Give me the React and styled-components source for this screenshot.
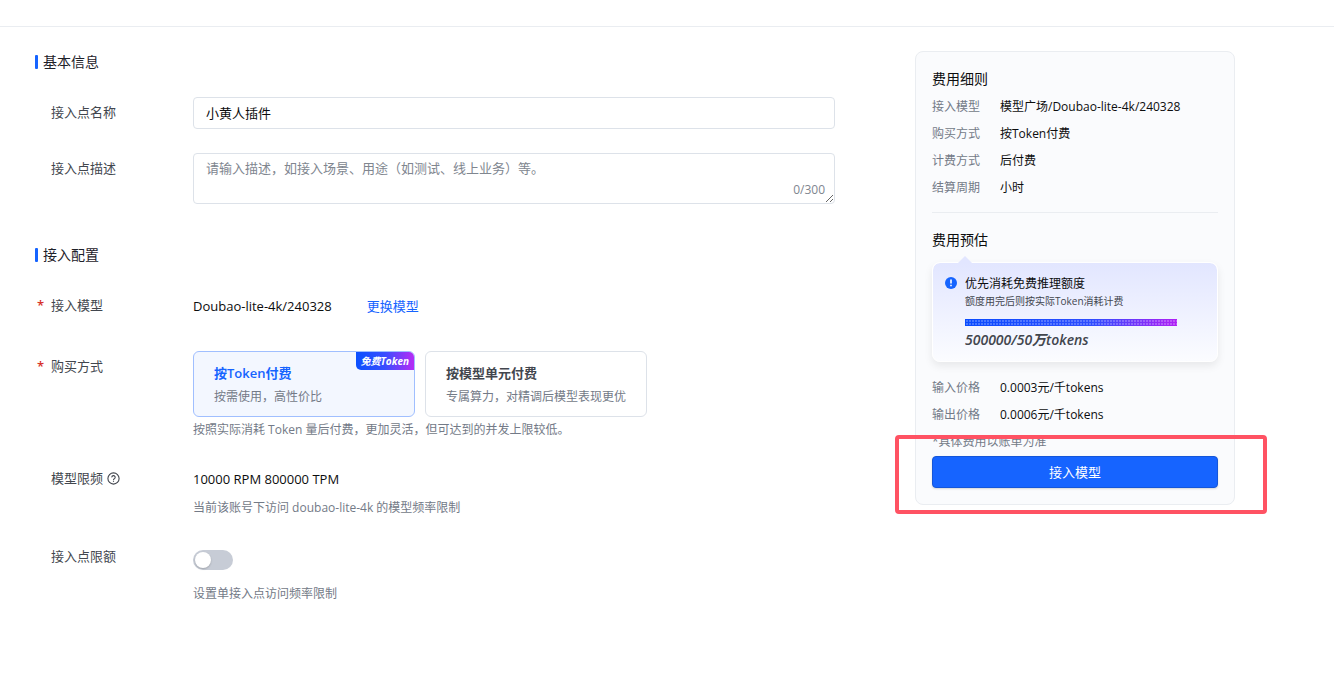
import { useState } from "react";
import styled, { createGlobalStyle, css } from "styled-components";

const GlobalStyle = createGlobalStyle`
  * {
    box-sizing: border-box;
  }

  body {
    margin: 0;
    background: #fff;
    color: #0c0d0e;
    font-family: "Open Sans", "Noto Sans CJK SC", sans-serif;
    font-size: 13px;
    line-height: 22px;
  }

  input,
  textarea,
  button {
    font: inherit;
  }
`

const TopBar = styled.header`
  height: 27px;
  border-bottom: 1px solid #eaedf1;
`

const Page = styled.main`
  display: flex;
  align-items: flex-start;
  gap: 80px;
  padding: 24px 99px 40px 35px;
`

const Form = styled.form`
  flex: 1;
  min-width: 0;
  display: flex;
  flex-direction: column;
  gap: 40px;
`

const SectionTitle = styled.h2`
  display: flex;
  align-items: center;
  gap: 5px;
  margin: 0 0 24px;
  font-size: 14px;
  font-weight: 400;
  color: #1d2129;

  &::before {
    content: "";
    width: 3px;
    height: 14px;
    border-radius: 1px;
    background: #1664ff;
  }
`

const Rows = styled.div`
  display: flex;
  flex-direction: column;
  gap: ${({ $gap }) => $gap}px;
`

const Row = styled.div`
  display: flex;
  align-items: flex-start;
  padding-left: 16px;
`

const labelText = css`
  position: relative;
  display: flex;
  align-items: center;
  gap: 4px;
  flex: 0 0 142px;
  line-height: 30px;
  color: #42464e;
`

const RowLabel = styled.label`
  ${labelText}
`

const RowName = styled.span`
  ${labelText}
`

const Required = styled.span`
  position: absolute;
  left: -14px;
  font-weight: 600;
  color: #d7312a;
`

const Control = styled.div`
  flex: 1;
  min-width: 0;
`

const field = css`
  display: block;
  width: 100%;
  border: 1px solid #dde2e9;
  border-radius: 4px;
  background: #fff;
  color: #0c0d0e;
  outline: none;

  &::placeholder {
    color: #80868f;
    opacity: 1;
  }
`

const TextInput = styled.input`
  ${field}
  height: 32px;
  padding: 0 12px 2px;
`

const AreaWrap = styled.div`
  position: relative;
`

const TextArea = styled.textarea`
  ${field}
  height: 51px;
  padding: 3px 12px;
  resize: vertical;
`

const Counter = styled.span`
  position: absolute;
  right: 10px;
  bottom: 4px;
  font-size: 12px;
  line-height: 20px;
  color: #80868f;
`

const Value = styled.div`
  display: flex;
  gap: 35px;
  min-height: ${({ $height }) => $height}px;
  line-height: 32px;
`

const TextLink = styled.a`
  color: #1664ff;
  text-decoration: none;
`

const Hint = styled.p`
  margin: ${({ $top }) => $top}px 0 0;
  font-size: 12px;
  color: #737a87;
`

const Options = styled.div`
  display: flex;
  flex-wrap: wrap;
  gap: 10px;
`

const Option = styled.label`
  position: relative;
  width: 222px;
  padding: 10px 20px 8px;
  border: 1px solid ${({ $active }) => ($active ? "#a0bfff" : "#dde2e9")};
  border-radius: 6px;
  background: ${({ $active }) => ($active ? "#f3f7ff" : "#fff")};
  cursor: pointer;

  input {
    position: absolute;
    opacity: 0;
  }
`

const OptionTitle = styled.strong`
  display: block;
  font-weight: 600;
  color: ${({ $active }) => ($active ? "#1664ff" : "#42464e")};
`

const OptionText = styled.span`
  display: block;
  margin-top: 2px;
  font-size: 12px;
  color: #737a87;
`

const Badge = styled.span`
  position: absolute;
  top: 0;
  right: 0;
  padding: 0 5px;
  border-radius: 0 5px 0 5px;
  background: linear-gradient(90deg, #0a50ff, #3a4dff 50%, #b62cf5);
  color: #fff;
  font-size: 10px;
  font-style: italic;
  font-weight: 700;
  line-height: 18px;
`

const Switch = styled.input`
  appearance: none;
  display: block;
  width: 40px;
  height: 20px;
  margin: 9px 0 0;
  padding: 2px;
  border-radius: 10px;
  background: ${({ checked }) => (checked ? "#1664ff" : "#c7ccd6")};
  cursor: pointer;

  &::before {
    content: "";
    display: block;
    width: 16px;
    height: 16px;
    margin-left: ${({ checked }) => (checked ? 20 : 0)}px;
    border-radius: 50%;
    background: #fff;
    box-shadow: 0 1px 2px rgba(0, 0, 0, 0.2);
  }
`

const Panel = styled.aside`
  flex: 0 0 320px;
  display: flex;
  flex-direction: column;
  padding: 16px;
  border: 1px solid #eaedf1;
  border-radius: 8px;
  background: #fafbfd;
`

const PanelTitle = styled.h3`
  margin: 0;
  font-size: 14px;
  font-weight: 400;
`

const Details = styled.dl`
  display: grid;
  grid-template-columns: 48px 1fr;
  gap: 7px 20px;
  margin: ${({ $top }) => $top}px 0 0;
  font-size: 12px;
  line-height: 20px;

  dt {
    color: #737a87;
  }

  dd {
    margin: 0;
  }
`

const Divider = styled.hr`
  width: 100%;
  margin: 14px 0 16px;
  border: 0;
  border-top: 1px solid #eaedf1;
`

const Quota = styled.div`
  position: relative;
  display: flex;
  align-items: flex-start;
  gap: 8px;
  margin-top: 11px;
  padding: 11px 40px 11px 12px;
  border: 1px solid #fff;
  border-radius: 8px;
  background: linear-gradient(#e2e6ff, #fbfcff) padding-box;
  box-shadow: 0 4px 8px rgba(0, 0, 0, 0.08);

  &::before {
    content: "";
    position: absolute;
    top: -7px;
    left: 25px;
    border: 7px solid transparent;
    border-top: 0;
    border-bottom-color: #e2e6ff;
  }
`

const QuotaIcon = styled.svg`
  flex: none;
  margin-top: 3px;
`

const QuotaBody = styled.div`
  flex: 1;
  font-size: 12px;
  line-height: 20px;
`

const QuotaNote = styled.div`
  font-size: 10px;
  line-height: 14px;
  color: #42464e;
`

const QuotaBar = styled.div`
  height: 7px;
  margin-top: 11px;
  background:
    radial-gradient(circle at 2px 2px, rgba(255, 255, 255, 0.24) 1px, transparent 1px) 0 0 / 3px 3px,
    linear-gradient(90deg, #0a4cff, #2f4dff 60%, #b020f5);
`

const QuotaCount = styled.div`
  margin-top: 4px;
  font-size: 14px;
  font-style: italic;
  font-weight: 600;
  color: #42464e;
`

const BillNote = styled.p`
  margin: 7px 0 4px;
  font-size: 12px;
  line-height: 20px;
  color: #737a87;
`

const Action = styled.div`
  position: relative;
`

const SubmitButton = styled.button`
  display: block;
  width: 100%;
  height: 32px;
  border: 1px solid #1456d9;
  border-radius: 4px;
  background: #1664ff;
  color: #fff;
  box-shadow: 0 1px 2px rgba(0, 0, 0, 0.15);
  cursor: pointer;
`

const Highlight = styled.div`
  position: absolute;
  inset: -21px -49px -26px -37px;
  border: 4px solid #ff5263;
  border-radius: 4px;
  pointer-events: none;
`

const HelpIcon = () => (
    <svg width="13" height="13" viewBox="0 0 13 13" fill="none" stroke="#42464e" strokeWidth="1.1">
        <circle cx="6.5" cy="6.5" r="5.6"/>
        <path d="M4.8 5.4a1.7 1.7 0 1 1 2.5 1.4c-.6.3-.8.6-.8 1.1"/>
        <path d="M6.5 8.7v1.1"/>
    </svg>
)

const options = [
    {
        id: "token",
        title: "按Token付费",
        text: "按需使用，高性价比",
        badge: "免费Token",
    },
    {
        id: "unit",
        title: "按模型单元付费",
        text: "专属算力，对精调后模型表现更优",
    },
]

const details = [
    ["接入模型", "模型广场/Doubao-lite-4k/240328"],
    ["购买方式", "按Token付费"],
    ["计费方式", "后付费"],
    ["结算周期", "小时"],
]

const prices = [
    ["输入价格", "0.0003元/千tokens"],
    ["输出价格", "0.0006元/千tokens"],
]

const DetailList = ({ items, top }) => (
    <Details $top={top}>
        {items.map(([name, value]) => [
            <dt key={name}>{name}</dt>,
            <dd key={value}>{value}</dd>,
        ])}
    </Details>
)

const App = () => {
    const [name, setName] = useState("小黄人插件")
    const [description, setDescription] = useState("")
    const [payment, setPayment] = useState("token")
    const [limited, setLimited] = useState(false)

    return (
        <>
            <GlobalStyle/>
            <TopBar/>
            <Page>
                <Form id="endpoint" onSubmit={(e) => e.preventDefault()}>
                    <section>
                        <SectionTitle>基本信息</SectionTitle>
                        <Rows $gap={24}>
                            <Row>
                                <RowLabel htmlFor="name">接入点名称</RowLabel>
                                <Control>
                                    <TextInput id="name" value={name} onChange={(e) => setName(e.target.value)}/>
                                </Control>
                            </Row>
                            <Row>
                                <RowLabel htmlFor="description">接入点描述</RowLabel>
                                <Control>
                                    <AreaWrap>
                                        <TextArea
                                            id="description"
                                            maxLength={300}
                                            placeholder="请输入描述，如接入场景、用途（如测试、线上业务）等。"
                                            value={description}
                                            onChange={(e) => setDescription(e.target.value)}
                                        />
                                        <Counter>{description.length}/300</Counter>
                                    </AreaWrap>
                                </Control>
                            </Row>
                        </Rows>
                    </section>

                    <section>
                        <SectionTitle>接入配置</SectionTitle>
                        <Rows $gap={22}>
                            <Row>
                                <RowName><Required>*</Required>接入模型</RowName>
                                <Control>
                                    <Value $height={39}>
                                        <span>Doubao-lite-4k/240328</span>
                                        <TextLink href="#model">更换模型</TextLink>
                                    </Value>
                                </Control>
                            </Row>
                            <Row>
                                <RowName id="payment"><Required>*</Required>购买方式</RowName>
                                <Control>
                                    <Options role="radiogroup" aria-labelledby="payment">
                                        {options.map((option) => (
                                            <Option key={option.id} $active={payment === option.id}>
                                                <input
                                                    type="radio"
                                                    name="payment"
                                                    checked={payment === option.id}
                                                    onChange={() => setPayment(option.id)}
                                                />
                                                <OptionTitle $active={payment === option.id}>{option.title}</OptionTitle>
                                                <OptionText>{option.text}</OptionText>
                                                {option.badge && <Badge>{option.badge}</Badge>}
                                            </Option>
                                        ))}
                                    </Options>
                                    <Hint $top={2}>按照实际消耗 Token 量后付费，更加灵活，但可达到的并发上限较低。</Hint>
                                </Control>
                            </Row>
                            <Row>
                                <RowName>模型限频<HelpIcon/></RowName>
                                <Control>
                                    <Value $height={32}>10000 RPM 800000 TPM</Value>
                                    <Hint $top={2}>当前该账号下访问 doubao-lite-4k 的模型频率限制</Hint>
                                </Control>
                            </Row>
                            <Row>
                                <RowLabel htmlFor="limit">接入点限额</RowLabel>
                                <Control>
                                    <Switch
                                        id="limit"
                                        type="checkbox"
                                        role="switch"
                                        checked={limited}
                                        onChange={(e) => setLimited(e.target.checked)}
                                    />
                                    <Hint $top={13}>设置单接入点访问频率限制</Hint>
                                </Control>
                            </Row>
                        </Rows>
                    </section>
                </Form>

                <Panel>
                    <PanelTitle>费用细则</PanelTitle>
                    <DetailList items={details} top={7}/>
                    <Divider/>
                    <PanelTitle>费用预估</PanelTitle>
                    <Quota>
                        <QuotaIcon width="12" height="12" viewBox="0 0 12 12">
                            <circle cx="6" cy="6" r="6" fill="#1664ff"/>
                            <path d="M6 2.6v4M6 7.8v1.5" stroke="#fff" strokeWidth="1.6"/>
                        </QuotaIcon>
                        <QuotaBody>
                            优先消耗免费推理额度
                            <QuotaNote>额度用完后则按实际Token消耗计费</QuotaNote>
                            <QuotaBar/>
                            <QuotaCount>500000/50万tokens</QuotaCount>
                        </QuotaBody>
                    </Quota>
                    <DetailList items={prices} top={16}/>
                    <BillNote>*具体费用以账单为准</BillNote>
                    <Action>
                        <SubmitButton type="submit" form="endpoint">接入模型</SubmitButton>
                        <Highlight/>
                    </Action>
                </Panel>
            </Page>
        </>
    )
}

export default App
